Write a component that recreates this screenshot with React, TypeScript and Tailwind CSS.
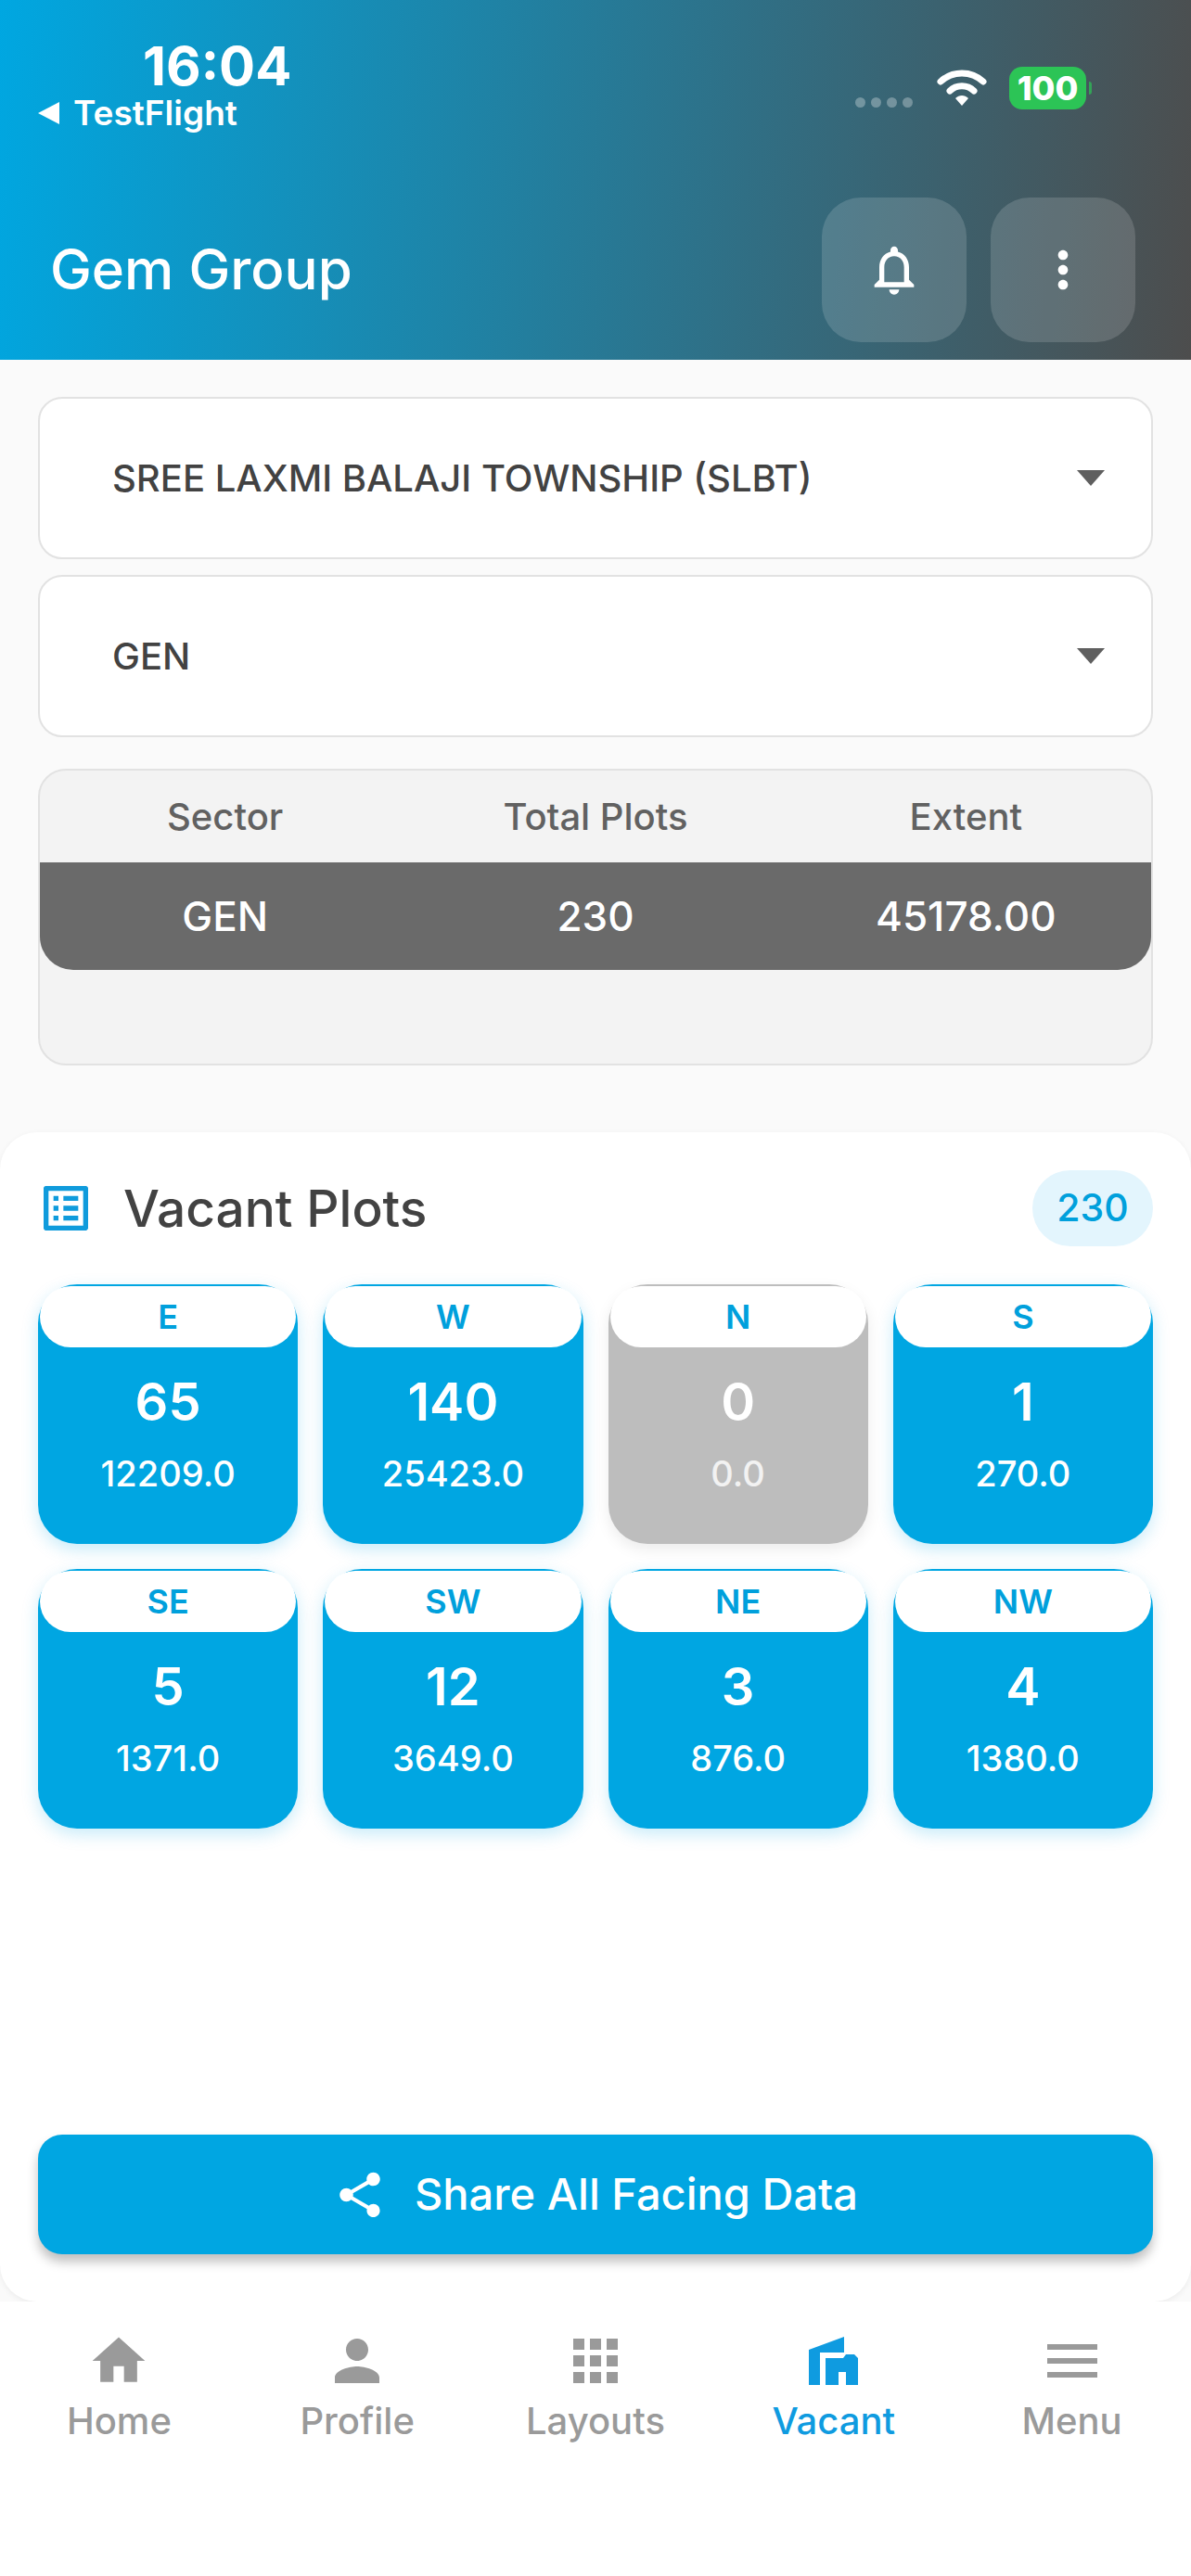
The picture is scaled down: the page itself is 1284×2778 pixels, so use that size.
import React from 'react';
import { MdApps, MdHome, MdMenu, MdMoreVert, MdNotificationsNone, MdOutlineListAlt, MdPerson, MdShare } from 'react-icons/md';

const VacantIcon: React.FC = () => (
  <svg width="53" height="52" viewBox="0 0 53 52" fill="#0f9be0">
    <path d="M0 52V14L38 0V17H12V52Z" />
    <path d="M18 52V23H37L40 19H49L53 23V52H40V38H32V52Z" />
  </svg>
);

const WifiIcon: React.FC = () => (
  <svg width="54" height="42" viewBox="0 0 54 42" fill="none" stroke="white" strokeWidth="7" strokeLinecap="round">
    <path d="M4 13C17 1 37 1 50 13" />
    <path d="M14 23C21 16 33 16 40 23" />
    <path d="M20 31L27 39L34 31C30 27 24 27 20 31Z" fill="white" stroke="none" />
  </svg>
);

const Caret: React.FC = () => (
  <svg width="30" height="17" viewBox="0 0 30 17" fill="#5f5f5f">
    <path d="M0 0H30L15 17Z" />
  </svg>
);

const SelectBox: React.FC<{ label: string }> = ({ label }) => (
  <div className="h-[175px] rounded-[26px] border-2 border-[#e2e2e2] bg-white pl-[78px] pr-[50px] flex items-center justify-between">
    <span className="text-[40px] font-medium text-[#424242]">{label}</span>
    <Caret />
  </div>
);

const PlotCard: React.FC<{ face: string; count: number; area: string }> = ({ face, count, area }) => {
  const empty = count === 0;
  return (
    <div className={`h-[280px] rounded-[42px] p-[2px] flex flex-col items-center ${empty ? 'bg-[#bdbdbd] shadow-[0_6px_16px_rgba(0,0,0,0.08)]' : 'bg-[#00a6e2] shadow-[0_6px_18px_rgba(0,166,226,0.22)]'}`}>
      <div className="w-full h-[66px] rounded-[38px] bg-white flex items-center justify-center text-[36px] font-semibold text-[#00a0dc]">
        {face}
      </div>
      <div className="mt-[28px] text-[56px] leading-[62px] font-semibold text-white">{count}</div>
      <div className={`mt-[23px] text-[38px] leading-[46px] font-medium ${empty ? 'text-white/80' : 'text-white'}`}>{area}</div>
    </div>
  );
};

const NavItem: React.FC<{ label: string; icon: React.ReactNode; active?: boolean }> = ({ label, icon, active }) => (
  <div className={`flex flex-col items-center ${active ? 'text-[#0f9be0]' : 'text-[#9a9a9a]'}`}>
    <div className="h-[72px] flex items-center justify-center">{icon}</div>
    <span className="mt-[5px] text-[40px] leading-[48px] font-medium">{label}</span>
  </div>
);

const plots = [
  { face: 'E', count: 65, area: '12209.0' },
  { face: 'W', count: 140, area: '25423.0' },
  { face: 'N', count: 0, area: '0.0' },
  { face: 'S', count: 1, area: '270.0' },
  { face: 'SE', count: 5, area: '1371.0' },
  { face: 'SW', count: 12, area: '3649.0' },
  { face: 'NE', count: 3, area: '876.0' },
  { face: 'NW', count: 4, area: '1380.0' },
];

export default function App() {
  return (
    <div className="w-[1284px] h-[2778px] flex flex-col bg-[#fafafa] font-[Inter,sans-serif]">
      <header className="h-[388px] shrink-0 bg-[linear-gradient(95deg,#00a7e1_0%,#4d4d4d_100%)] text-white pl-[41px] pr-[60px] flex flex-col">
        <div className="h-[213px] flex justify-between">
          <div className="pt-[42px]">
            <div className="ml-[113px] text-[58px] leading-[58px] font-bold">16:04</div>
            <div className="flex items-center gap-[15px]">
              <span className="w-0 h-0 border-y-[12px] border-y-transparent border-r-[23px] border-r-white" />
              <span className="text-[37px] leading-[44px] font-semibold">TestFlight</span>
            </div>
          </div>
          <div className="pt-[72px] pr-[47px] flex items-start">
            <div className="flex gap-[6px] mt-[33px] mr-[26px]">
              <span className="w-[11px] h-[11px] rounded-full bg-white/30" />
              <span className="w-[11px] h-[11px] rounded-full bg-white/30" />
              <span className="w-[11px] h-[11px] rounded-full bg-white/30" />
              <span className="w-[11px] h-[11px] rounded-full bg-white/30" />
            </div>
            <div className="mt-[3px]">
              <WifiIcon />
            </div>
            <div className="ml-[24px] w-[83px] h-[46px] rounded-[14px] bg-[#2cc456] flex items-center justify-center text-[36px] font-extrabold leading-none">
              100
            </div>
            <span className="ml-[3px] mt-[16px] w-[3px] h-[14px] rounded-r-full bg-[#2cc456]/70" />
          </div>
        </div>
        <div className="flex items-start justify-between">
          <div className="mt-[43px] ml-[13px] text-[60px] leading-[68px] font-medium">Gem Group</div>
          <div className="flex gap-[26px]">
            <div className="w-[156px] h-[156px] rounded-[42px] bg-white/15 flex items-center justify-center">
              <MdNotificationsNone size={64} />
            </div>
            <div className="w-[156px] h-[156px] rounded-[42px] bg-white/15 flex items-center justify-center">
              <MdMoreVert size={64} />
            </div>
          </div>
        </div>
      </header>

      <section className="px-[41px] pt-[40px] flex flex-col">
        <SelectBox label="SREE LAXMI BALAJI TOWNSHIP (SLBT)" />
        <div className="mt-[17px]">
          <SelectBox label="GEN" />
        </div>
        <div className="mt-[34px] h-[320px] rounded-[30px] border-2 border-[#e2e2e2] bg-[#f3f3f3]">
          <div className="h-[99px] grid grid-cols-3 items-center text-center text-[40px] font-medium text-[#616161]">
            <span>Sector</span>
            <span>Total Plots</span>
            <span>Extent</span>
          </div>
          <div className="h-[116px] rounded-b-[36px] bg-[#6a6a6a] grid grid-cols-3 items-center text-center text-[44px] font-medium text-white">
            <span>GEN</span>
            <span>230</span>
            <span>45178.00</span>
          </div>
        </div>
      </section>

      <main className="mt-[72px] h-[1261px] shrink-0 rounded-[40px] bg-white shadow-[0_2px_6px_rgba(0,0,0,0.06)] px-[41px] pt-[41px] flex flex-col">
        <div className="h-[82px] flex items-center justify-between">
          <div className="flex items-center">
            <MdOutlineListAlt size={64} className="ml-[-2px] text-[#0f9bdc]" />
            <span className="ml-[30px] text-[55px] font-medium text-[#424242]">Vacant Plots</span>
          </div>
          <div className="w-[130px] h-[82px] rounded-full bg-[#e3f5fd] flex items-center justify-center text-[41px] font-medium text-[#00a0dc]">
            230
          </div>
        </div>
        <div className="mt-[41px] grid grid-cols-4 gap-x-[27px] gap-y-[27px]">
          {plots.map((p) => (
            <PlotCard key={p.face} face={p.face} count={p.count} area={p.area} />
          ))}
        </div>
        <button className="mt-[330px] h-[129px] rounded-[26px] bg-[#00a6e2] shadow-[0_8px_12px_rgba(0,0,0,0.25)] flex items-center justify-center gap-[30px] text-white text-[47px] font-medium">
          <MdShare size={58} />
          Share All Facing Data
        </button>
      </main>

      <nav className="flex-1 bg-white pt-[28px] grid grid-cols-5 content-start">
        <NavItem label="Home" icon={<MdHome size={68} />} />
        <NavItem label="Profile" icon={<MdPerson size={72} />} />
        <NavItem label="Layouts" icon={<MdApps size={72} />} />
        <NavItem label="Vacant" active icon={<VacantIcon />} />
        <NavItem label="Menu" icon={<MdMenu size={72} />} />
      </nav>
    </div>
  );
}
